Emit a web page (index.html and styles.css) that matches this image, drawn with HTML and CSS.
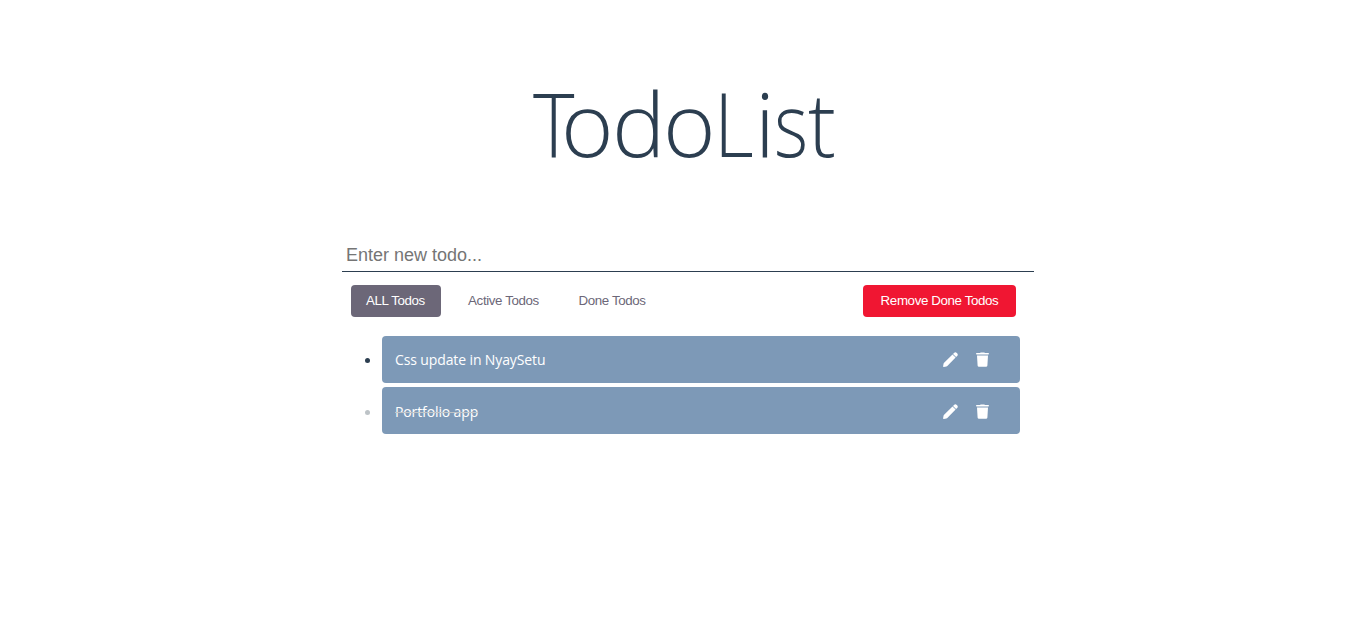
FILE: index.html
```html
<!DOCTYPE html>
<html lang="en">
<head>
<meta charset="utf-8">
<title>TodoList</title>
<link rel="stylesheet" href="styles.css">
</head>
<body>
<svg class="sprite" aria-hidden="true">
  <symbol id="pen" viewBox="0 0 15 15"><path fill="currentColor" d="M10 2l1-1a2 2 0 0 1 2.800 0l.3.300a2 2 0 0 1 0 2.800l-1 1zM9.500 2.500l3.100 3.100-8.300 8.300q-.4.400-.9.600L.8 14.900q-.8.100-.7-.7L.600 11.600q.1-.5.500-.9z"/></symbol>
  <symbol id="trash" viewBox="0 0 13 15"><path fill="currentColor" d="M4 1q.2-.6.800-.6h3.400q.6 0 .8.600h3.200q.8 0 .8.800t-.8.800H.8Q0 2.600 0 1.800T.8 1zM1 3.400h11l-.6 10q-.1 1.400-1.400 1.400H3q-1.300 0-1.400-1.400z"/></symbol>
</svg>
<main class="app">
  <h1 class="title"><span class="t1">T</span><span class="o1">o</span><span class="d">d</span><span class="o2">o</span><span class="l">L</span><span class="i">i</span><span class="s">s</span><span class="t2">t</span></h1>
  <input class="entry" type="text" placeholder="Enter new todo...">
  <div class="toolbar">
    <div class="filters">
      <button class="btn all active">ALL Todos</button>
      <button class="btn current">Active Todos</button>
      <button class="btn finished">Done Todos</button>
    </div>
    <button class="btn remove">Remove Done Todos</button>
  </div>
  <ul class="todos">
    <li class="todo">
      <span class="dot"></span>
      <div class="card">
        <span class="text">Css update in NyaySetu</span>
        <svg class="pen"><use href="#pen"/></svg>
        <svg class="trash"><use href="#trash"/></svg>
      </div>
    </li>
    <li class="todo done">
      <span class="dot"></span>
      <div class="card">
        <span class="text">Portfolio app</span>
        <svg class="pen"><use href="#pen"/></svg>
        <svg class="trash"><use href="#trash"/></svg>
      </div>
    </li>
  </ul>
</main>
</body>
</html>
```
FILE: styles.css
```css
* { box-sizing: border-box; }
body { margin: 0; background: #fff; color: #2c3e50; font-family: "Open Sans", sans-serif; }
.sprite { display: none; }
.app { width: 692px; margin-left: 342px; padding-top: 63px; }
.title { display: flex; margin: 0; height: 175px; padding-left: 191px; font-size: 88px; line-height: 120px; font-weight: 300; white-space: nowrap; }
.title span { transform-origin: left; }
.t1 { width: 28px; letter-spacing: -17px; transform: scaleX(.9); }
.o1, .d, .o2 { width: 51px; transform: scaleX(1.02); }
.l { width: 41px; transform: scaleX(.88); }
.i { width: 19px; }
.s { width: 34px; letter-spacing: -2px; transform: scaleX(.83); }
.t2 { width: 27px; transform: scaleX(.95); }
.entry { display: block; width: 100%; height: 34px; padding: 1px 4px 0; border: 0; border-bottom: 1px solid #2c3e50; outline: 0; background: none; font: 18px "Liberation Sans", Arial, sans-serif; }
.entry::placeholder { color: #757575; opacity: 1; }
.toolbar { display: flex; justify-content: space-between; padding: 13px 18px 0 9px; }
.filters { display: flex; gap: 12px; }
.btn { height: 32px; padding: 0; border: 0; border-radius: 4px; background: none; color: #6c6778; font: 13.333px/32px "Liberation Sans", Arial, sans-serif; letter-spacing: -.38px; white-space: nowrap; }
.all { width: 90px; padding-right: 1px; }
.current { width: 101px; }
.finished { width: 92px; }
.active { background: #6c6778; color: #fff; }
.remove { width: 153px; background: #f01632; color: #fff; }
.todos { display: flex; flex-direction: column; gap: 4px; margin: 19px 14px 0 23px; padding: 0; list-style: none; }
.todo { display: flex; align-items: center; gap: 12px; }
.dot { width: 5px; height: 5px; margin-top: 2px; border-radius: 50%; background: #2c3e50; }
.done .dot { margin-top: 4px; background: #bdc3c7; }
.card { display: flex; align-items: center; flex: 1; height: 47px; padding: 0 31px 0 13px; border-radius: 4px; background: #7d99b7; color: #fff; font-size: 14px; }
.done .card { padding-top: 2px; }
.text { margin-right: auto; letter-spacing: -.12px; }
.done .text { text-decoration: line-through 1px #bdc3c7; }
.pen { width: 15px; height: 15px; margin-right: 18px; }
.trash { width: 13px; height: 15px; }
```
